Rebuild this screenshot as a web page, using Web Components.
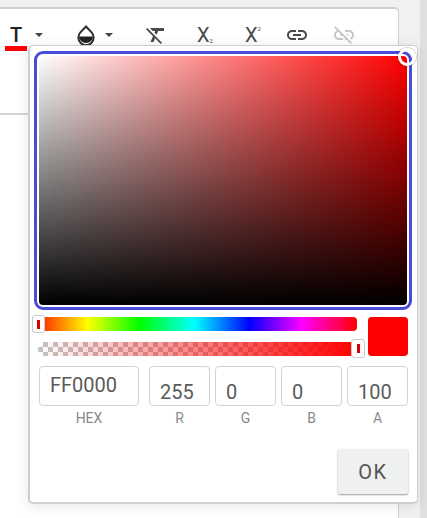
<!DOCTYPE html>
<html>
<head>
<meta charset="utf-8">
<style>
    html, body { margin: 0; height: 100%; overflow: hidden; background: #f1f1f1; }
    body { font-family: Roboto, "Liberation Sans", sans-serif; }
</style>
</head>
<body>
<app-frame>
    <editor-toolbar></editor-toolbar>
    <color-picker></color-picker>
</app-frame>

<script>
// ==================
// MARCO DE LA PAGINA
// ==================
class AppFrame extends HTMLElement {
    constructor() {
        super();
        this.attachShadow({mode: "open"}).innerHTML = `<style>
            :host { display: flex; position: relative; width: 427px; height: 518px; overflow: hidden; box-sizing: border-box; padding-top: 7px; }
            .card {
                width: 399px; height: 511px; box-sizing: border-box; background: #fff;
                border-top: 2px solid #d0d0d0; border-right: 1px solid #d0d0d0;
                border-top-right-radius: 5px;
            }
            .scroll { width: 7px; height: 518px; margin-top: -7px; margin-left: 21px; background: #e0e0e0; flex: none; }
        </style>
        <div class="card"><slot></slot></div>
        <div class="scroll"></div>`;
    }
}

// =======
// TOOLBAR
// =======
const iconos = {
    clear: "M3.27 5L2 6.27l6.97 6.97L6.5 19h3l1.57-3.66L16.73 21 18 19.73 3.55 5.27 3.27 5zM6 5v.18L8.82 8h2.4l-.72 1.68 2.1 2.1L14.21 8H20V5H6z",
    link: "M3.9 12c0-1.71 1.39-3.1 3.1-3.1h4V7H7c-2.76 0-5 2.24-5 5s2.24 5 5 5h4v-1.9H7c-1.71 0-3.1-1.39-3.1-3.1zM8 13h8v-2H8v2zm9-6h-4v1.9h4c1.71 0 3.1 1.39 3.1 3.1s-1.39 3.1-3.1 3.1h-4V17h4c2.76 0 5-2.24 5-5s-2.24-5-5-5z",
    unlink: "M17 7h-4v1.9h4c1.71 0 3.1 1.39 3.1 3.1 0 1.43-.98 2.63-2.31 2.98l1.46 1.46C20.88 15.61 22 13.95 22 12c0-2.76-2.24-5-5-5zm-1 4h-2.19l2 2H16zM2 4.27l3.11 3.11C3.29 8.12 2 9.91 2 12c0 2.76 2.24 5 5 5h4v-1.9H7c-1.71 0-3.1-1.39-3.1-3.1 0-1.59 1.21-2.9 2.76-3.07L8.73 11H8v2h2.73L13 15.27V17h1.73l4.01 4L20 19.74 3.27 3 2 4.27z"
};

class EditorToolbar extends HTMLElement {
    constructor() {
        super();
        const svg = (d, fill) => `<svg width="24" height="24" viewBox="0 0 24 24" fill="${fill || "#4a4a4a"}"><path d="${d}"/></svg>`;
        const caret = (margen) => `<svg style="margin-left:${margen}px" class="caret" width="8" height="4" viewBox="0 0 8 4" fill="#444"><path d="M0 0h8L4 4z"/></svg>`;
        this.attachShadow({mode: "open"}).innerHTML = `<style>
            :host { display: block; height: 106px; border-bottom: 2px solid #d4d4d4; box-sizing: border-box; color: #333; }
            .fila { display: flex; align-items: center; height: 52px; padding-left: 4px; }
            .btn { display: flex; align-items: center; justify-content: center; flex: none; height: 26px; }
            .t { width: 24px; font-size: 20px; font-weight: 500; line-height: 26px; text-align: center; color: #222; position: relative; }
            .t::after { content: ""; position: absolute; left: 1px; right: 1px; bottom: -3px; height: 5px; background: #f00; }
            .x { font-size: 20px; color: #4a4a4a; line-height: 24px; }
            .x small { font-size: 6px; line-height: 6px; }
            .caret { flex: none; }
        </style>
        <div class="fila">
            <span class="btn t">T</span>${caret(7)}
            <span class="btn" style="margin-left:34px">
                <svg width="18" height="20" viewBox="0 0 18 20"><path d="M9 1.5 L14.6 7.400 A7.6 7.6 0 1 1 3.400 7.400 Z" fill="#fff" stroke="#2d2d2d" stroke-width="2"/><path d="M2.200 11.500h13.600c.2 3.400-3 6.500-6.800 6.500s-7-3.100-6.800-6.500z" fill="#222"/></svg>
            </span>${caret(10)}
            <span class="btn" style="margin-left:31px">${svg(iconos.clear)}</span>
            <span class="btn x" style="margin-left:29px">X<small style="align-self:flex-end;margin-bottom:4px">2</small></span>
            <span class="btn x" style="margin-left:32px">X<small style="align-self:flex-start;margin-top:4px">2</small></span>
            <span class="btn" style="margin-left:24px">${svg(iconos.link)}</span>
            <span class="btn" style="margin-left:23px">${svg(iconos.unlink, "#c8c8c8")}</span>
        </div>`;
    }
}

// ==============
// CAMPO DE TEXTO
// ==============
class ColorField extends HTMLElement {
    constructor() {
        super();
        this.attachShadow({mode: "open"});
    }

    connectedCallback() {
        this.render();
    }

    render() {
        const arriba = this.hasAttribute("alto");
        this.shadowRoot.innerHTML = `<style>
            :host { display: flex; flex-direction: column; align-items: stretch; }
            .caja {
                height: 40px; box-sizing: border-box; border: 1px solid #d2d2d2; border-radius: 4px;
                padding: ${arriba ? "5px" : "12px"} 10px 0; font-size: 20px; line-height: 26px; color: #5a5a5a;
            }
            .etiqueta { margin-top: 3px; text-align: center; font-size: 14px; line-height: 18px; color: #8a8a8a; }
        </style>
        <div class="caja">${this.getAttribute("valor")}</div>
        <div class="etiqueta">${this.getAttribute("etiqueta")}</div>`;
    }
}

// ========
// SELECTOR
// ========
class ColorPicker extends HTMLElement {
    constructor() {
        super();
        this.attachShadow({mode: "open"}).innerHTML = `<style>
            :host {
                position: absolute; left: 28px; top: 45px; width: 390px; height: 459px; box-sizing: border-box;
                background: #fff; border: 1px solid #cfcfcf; border-bottom-width: 2px; border-left-width: 2px; border-radius: 5px;
                box-shadow: 0 2px 14px rgba(0,0,0,.1);
                padding: 5px 9px 0 4px;
            }
            .marco { height: 259px; margin-right: -4px; box-sizing: border-box; border: 3px solid #4b4bd9; border-radius: 9px; padding: 2px; }
            .mapa {
                height: 100%; border-radius: 4px;
                background: linear-gradient(to top, #000, transparent), linear-gradient(to right, #fff, #f00);
            }
            .aro {
                position: absolute; left: 368px; top: 2px; width: 12px; height: 12px;
                border: 3px solid #fff; border-radius: 50%; box-shadow: 0 0 1px 1px rgba(0,0,0,.18);
            }
            .barras { display: flex; margin-top: 5px; }
            .sliders { flex: 1; margin-left: -2px; }
            .hue {
                position: relative; height: 14px; margin-top: 2px; border-radius: 0 4px 4px 0;
                background: linear-gradient(to right, #f00 0%, #ff0 17%, #0f0 33%, #0ff 50%, #00f 67%, #f0f 83%, #f00 100%);
            }
            .alfa {
                position: relative; height: 14px; margin: 11px 0 0 6px; border-radius: 7px 0 0 7px;
                background: linear-gradient(to right, rgba(255,0,0,0), #f00),
                    repeating-conic-gradient(#c4c4c4 0% 25%, #fff 0% 50%) 0 0 / 10px 10px;
            }
            .thumb {
                position: absolute; box-sizing: border-box; border: 1px solid #c9c9c9; border-radius: 3px; background: #fff;
                display: flex; align-items: center; justify-content: center;
            }
            .thumb i { width: 3px; height: 9px; background: #d80000; }
            .thumb-hue { left: 0; top: -2px; width: 13px; height: 18px; }
            .thumb-alfa { right: -8px; top: -3px; width: 14px; height: 19px; }
            .muestra { flex: none; width: 40px; height: 39px; margin: 2px 0 0 11px; background: #f00; border-radius: 4px; box-shadow: inset 0 0 1px rgba(0,0,0,.4); }
            .campos { display: flex; margin: 10px 0 0 5px; }
            .hex { width: 100px; margin-right: 10px; }
            .rgb { width: 61px; margin-right: 5px; }
            .rgb:last-child { margin-right: 0; }
            .pie { display: flex; justify-content: flex-end; margin-top: 22px; }
            button {
                width: 70px; height: 45px; border: none; border-radius: 2px; background: #eff0f0; color: #555;
                font: 400 20px Roboto, sans-serif; letter-spacing: 1.5px; padding: 0;
                box-shadow: 0 1px 2px rgba(0,0,0,.4);
            }
        </style>
        <div class="marco"><div class="mapa"></div></div>
        <span class="aro"></span>
        <div class="barras">
            <div class="sliders">
                <div class="hue"><span class="thumb thumb-hue"><i></i></span></div>
                <div class="alfa"><span class="thumb thumb-alfa"><i></i></span></div>
            </div>
            <div class="muestra"></div>
        </div>
        <div class="campos">
            <color-field class="hex" etiqueta="HEX" valor="FF0000" alto></color-field>
            <color-field class="rgb" etiqueta="R" valor="255"></color-field>
            <color-field class="rgb" etiqueta="G" valor="0"></color-field>
            <color-field class="rgb" etiqueta="B" valor="0"></color-field>
            <color-field class="rgb" etiqueta="A" valor="100"></color-field>
        </div>
        <div class="pie"><button>OK</button></div>`;
    }
}

customElements.define("app-frame", AppFrame);
customElements.define("editor-toolbar", EditorToolbar);
customElements.define("color-field", ColorField);
customElements.define("color-picker", ColorPicker);
</script>
</body>
</html>
